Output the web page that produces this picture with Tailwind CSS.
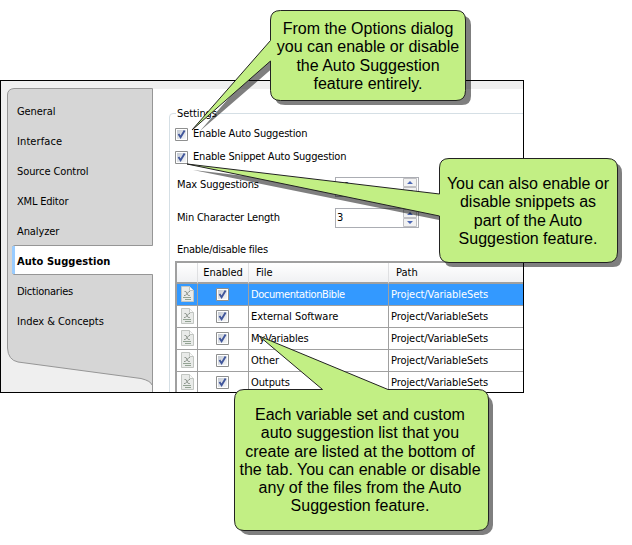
<!DOCTYPE html>
<html lang="en"><head><meta charset="utf-8"><title>Auto Suggestion options</title>
<script src="https://cdn.jsdelivr.net/npm/@tailwindcss/browser@4"></script></head>
<body class="bg-white">
<div class="relative w-[632px] h-[545px] overflow-hidden pt-20 font-['DejaVu_Sans_Condensed','DejaVu_Sans',sans-serif] text-[11px] leading-[14px] text-black">
<svg width="0" height="0" class="absolute"><defs>
<linearGradient id="cb" x1="0" y1="0" x2="1" y2="1"><stop offset="0" stop-color="#c3c9d3"/><stop offset="1" stop-color="#f8f9fa"/></linearGradient>
<symbol id="check" viewBox="0 0 13 13"><path d="M.5.5h12v12H.5z" fill="#fff" stroke="#8e8f8f"/><path d="M2 2h9v9H2z" fill="url(#cb)"/><path d="M3.500 6 5.600 9.300 9.600 2.600" fill="none" stroke="#40569b" stroke-width="1.9"/></symbol>
<symbol id="doc" viewBox="0 0 13 16"><path d="M.5.5h8l4 4v11H.5z" fill="#e9ebe9" stroke="#c2c6c2"/><path d="M8.500.5v4h4" fill="#fafafa" stroke="#c2c6c2"/><path d="M3.500 5.500h1.300L7.300 9.500h1.500M9 5.500H8L4.300 9.500H3" fill="none" stroke="#8b938b"/><path d="M2 11.500h8M4 13.500h6" stroke="#93a393"/></symbol>
<symbol id="spin" viewBox="0 0 14 18"><path d="M.5.5h13v8H.5zM.5 9.500h13v8H.5z" fill="#f2f2f2" stroke="#c0c0c4"/><path d="M4 6h6L7 3zM4 12h6l-3 3z" fill="#4b66b4"/></symbol>
</defs></svg>
<main class="flex w-[524px] h-[313px] border border-black bg-[#efefef] overflow-hidden">
 <nav class="relative w-[152px] shrink-0 pt-4">
  <svg class="absolute left-0 top-0" width="152" height="311" viewBox="1 81 152 311"><path d="M152.500 88.500H14Q7.500 89 7.500 95V348Q8 360 18 362L141 378.500Q151 381 152.500 386Z" fill="#d6d6d6"/><path d="M152.500 392V274.500H14Q12.500 274 12.500 272V248Q12.500 245.500 15 245.500H152.500V88.500H14Q7.500 89 7.500 95V348Q8 360 18 362L141 378.500Q151 381 152 385" fill="none" stroke="#969696"/><path d="M15 246H153V274H15z" fill="#fff"/><path d="M12 247l1-1h2v28h-2l-1-1z" fill="#99ccff"/></svg>
  <ul class="relative pl-4 leading-[30px]">
   <li class="tracking-[-0.1px]">General</li><li class="tracking-[0.1px]">Interface</li><li class="tracking-[-0.1px]">Source Control</li><li class="tracking-[-0.2px]">XML Editor</li><li class="tracking-[-0.1px]">Analyzer</li><li class="font-bold tracking-[0.05px]">Auto Suggestion</li><li class="tracking-[-0.25px]">Dictionaries</li><li class="tracking-[-0.03px]">Index &amp; Concepts</li>
  </ul>
 </nav>
 <section class="flex-1 mt-2 bg-white pl-4 pt-6 min-w-0 overflow-hidden">
  <div class="h-[300px] w-[370px] border border-[#d5dfe5] rounded-tl-[4px] pl-[5px]">
   <div class="-mt-[7px] ml-[1px] flex"><span class="bg-white px-px tracking-[-0.1px]">Settings</span></div>
   <label class="mt-[6px] h-[14px] flex items-center"><svg class="mr-[5px]" width="13" height="13"><use href="#check"/></svg><span class="tracking-[-0.18px]">Enable Auto Suggestion</span></label>
   <label class="mt-[9px] h-[14px] flex items-center"><svg class="mr-[5px]" width="13" height="13"><use href="#check"/></svg><span class="tracking-[-0.2px]">Enable Snippet Auto Suggestion</span></label>
   <div class="mt-[13px] h-5 flex items-center pl-0.5"><span class="w-[158px] pb-[5px] tracking-[-0.15px]">Max Suggestions</span><div class="w-[84px] h-5 border border-[#abadb3] flex justify-between pl-px pr-px leading-[18px]"><span>20</span><svg width="14" height="18"><use href="#spin"/></svg></div></div>
   <div class="mt-[11px] h-5 flex items-center pl-0.5"><span class="w-[158px] tracking-[-0.2px]">Min Character Length</span><div class="w-[84px] h-5 border border-[#abadb3] flex justify-between pl-px pr-px leading-[18px]"><span>3</span><svg width="14" height="18"><use href="#spin"/></svg></div></div>
   <div class="mt-[15px] pl-0.5 tracking-[-0.25px]">Enable/disable files</div>
   <div class="mt-[4px] grid grid-cols-[21px_51px_140px_160px] border-t-2 border-l-2 border-[#a0a0a0] w-[374px]">
    <div class="contents [&>*]:h-[21px] [&>*]:border-b-2 [&>*]:border-b-[#a0a0a0] [&>*]:border-r [&>*]:border-r-[#dfe0e2] [&>*]:bg-linear-to-b [&>*]:from-white [&>*]:to-[#f0f1f3] [&>*]:leading-[20px]"><div></div><div class="text-center tracking-[-0.1px]">Enabled</div><div class="pl-[7px]">File</div><div class="pl-[7px]">Path</div></div>
    <div id="rows" class="contents"></div>
   </div>
  </div>
 </section>
</main>
<template id="row"><div class="h-[22px] border-b border-r border-[#a0a0a0] pl-[4px] pt-[2px]"><svg width="13" height="16"><use href="#doc"/></svg></div><div class="h-[22px] border-b border-r border-[#a0a0a0] pl-[18px] pt-[4px]"><svg width="13" height="13"><use href="#check"/></svg></div><div class="h-[22px] border-b border-r border-[#a0a0a0] pl-[2px] leading-[22px]"><span class="file"></span></div><div class="h-[22px] border-b border-[#a0a0a0] pl-[2px] leading-[22px] tracking-[-0.07px]">Project/VariableSets</div></template>
<script>
const t=document.getElementById('row'),r=document.getElementById('rows');
[['DocumentationBible','tracking-[-0.4px]'],['External Software','tracking-[-0.03px]'],['MyVariables','tracking-[-0.2px]'],['Other','tracking-normal'],['Outputs','tracking-[-0.1px]']].forEach(([n,k],i)=>{const f=t.content.cloneNode(true),s=f.querySelector('.file');s.textContent=n;s.classList.add(k);if(!i)[...f.children].forEach(c=>c.classList.add('bg-[#3399ff]','text-white'));r.append(f)});
</script>
<svg class="absolute inset-0" width="632" height="545">
<g fill="#000" fill-opacity=".5"><path d="M285 16H462Q471 16 471 25V96Q471 105 462 105H285Q275 105 275 96V66L200 131L275 45V25Q275 16 285 16Z"/><path d="M453 163H613Q622 163 622 173V257Q622 267 613 267H453Q444 267 444 257V221L193 170L444 199V173Q444 163 453 163Z"/><rect x="239" y="395" width="254" height="140" rx="10"/></g>
<g fill="#c2ef84" stroke="#222"><path d="M280.500 10.500H456Q465.500 10.500 465.500 20V90.500Q465.500 100.500 456 100.500H280.500Q270.500 100.500 270.500 90.500V61L192 130L270.500 40.500V20Q270.500 10.500 280.500 10.500Z"/><path d="M449 158.500H607Q617.500 158.500 617.500 168V252Q617.500 262.500 607 262.500H449Q439.500 262.500 439.500 252V216L187 164L439.500 194V168Q439.500 158.500 449 158.500Z"/><path d="M244 389.500H322.500L259 336L388 389.500H478Q488.500 389.500 488.500 400V520Q488.500 530.500 478 530.500H244Q234.500 530.500 234.500 520V400Q234.500 389.500 244 389.500Z"/></g></svg>
<div class="absolute left-[270px] top-[20px] w-[196px] text-center font-['Liberation_Sans',sans-serif] text-[16px] leading-[18.300px] whitespace-nowrap"><div>From the Options dialog</div><div>you can enable or disable</div><div>the Auto Suggestion</div><div>feature entirely.</div></div>
<div class="absolute left-[439px] top-[175px] w-[178px] text-center font-['Liberation_Sans',sans-serif] text-[16px] leading-[18.300px] whitespace-nowrap"><div>You can also enable or</div><div>disable snippets as</div><div>part of the Auto</div><div>Suggestion feature.</div></div>
<div class="absolute left-[233px] top-[406px] w-[254px] text-center font-['Liberation_Sans',sans-serif] text-[16px] leading-[18.300px] whitespace-nowrap"><div>Each variable set and custom</div><div>auto suggestion list that you</div><div>create are listed at the bottom of</div><div>the tab. You can enable or disable</div><div>any of the files from the Auto</div><div>Suggestion feature.</div></div>
</div></body></html>
